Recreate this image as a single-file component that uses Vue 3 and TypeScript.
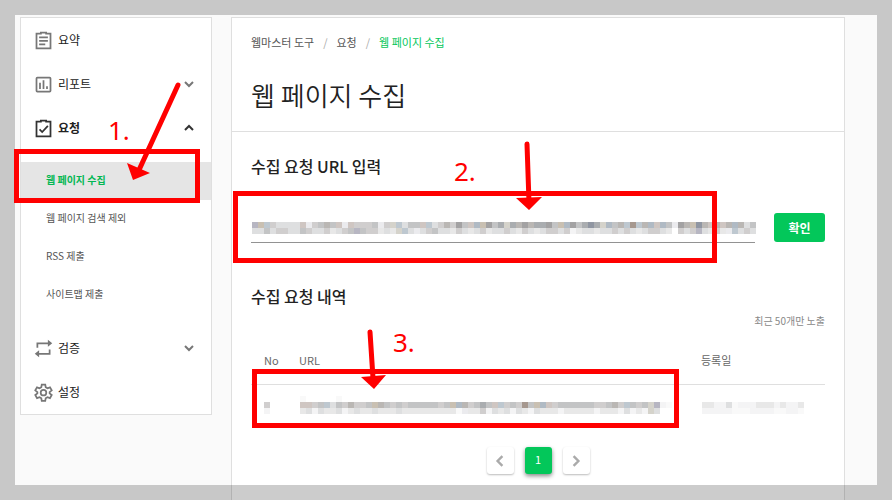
<script setup lang="ts">
import { ref } from 'vue'

interface Cell { x: number; y: number; fill: string }

const palette: Record<string, string> = {
  a: '#b7b6c2', b: '#c9c0b2', c: '#bec8d0', d: '#d0cece', e: '#dedfe0',
  f: '#ebebee', g: '#bab7b4', h: '#a3a2a3', i: '#9096a2', j: '#aaadb0',
  k: '#c3c4c5', l: '#cfc6c2', m: '#d5d3cb', n: '#a6988f', o: '#b0bac4',
  p: '#f4f4f5', q: '#e8e8e8', r: '#f9f9f9',
}

const size = 6

// Turns rows of palette letters into coloured blocks; a dot leaves a hole.
function mosaic(rows: string[]): Cell[] {
  return rows.flatMap((row, y) =>
    [...row].flatMap((key, x) =>
      palette[key] ? [{ x: x * size, y: y * size, fill: palette[key] }] : []))
}

const urlCells = mosaic([
  'abcdeeeelf' + 'dkgklflddd' + 'kfdmcekklc' + 'edgdhklobh' + 'kjmjghgjjh' + 'kbohkjijmo' + 'kgcncgolok' + 'fhgbiglglg' + 'ogek',
  'eekeddeekd' + 'eedqedkakd' + 'dqeqmcefed' + 'keeqdeqedq' + 'eedeqdeqed' + 'dedpqeeqee' + 'dedeqeddeq' + '.dedaeqdqf' + 'cede',
])
const noCells = mosaic(['d', 'p'])
const rowCells = mosaic([
  'r.....r.....................................................',
  'lldkcekdgddkbgkdkdkkkkkdkbogdkjklcdkdnkboldkkkkkkddkgdckdkma' + 'pr',
  'qepeqqepqeqqeqqqeqqqqqqqqqrfqqdpeqepeqpeqqqpqqqqqpqqqpepqpme',
])
const dateCells = mosaic(['qqpperpppqqqpqppqq', 'ppppprrrpppprrpprr'].map(row => row.slice(0, 17)))

const url = ref('')
const openGroup = ref('request')
const toggle = (name: string): void => {
  openGroup.value = openGroup.value === name ? '' : name
}
const subItems = ['웹 페이지 수집', '웹 페이지 검색 제외', 'RSS 제출', '사이트맵 제출']
const crumbs = ['웹마스터 도구', '요청']
</script>

<template>
  <div class="page">
    <nav class="side">
      <a class="item" href="#">
        <svg class="icon" viewBox="0 0 24 24"><path d="M9 4H4v17h16V4h-5M9 5V3h6v2M7 8.5h10M7 12.5h10M7 16.500h7" /></svg>
        <span>요약</span>
      </a>
      <button class="item" type="button" @click="toggle('report')">
        <svg class="icon" viewBox="0 0 24 24"><rect x="4" y="4" width="16" height="16" rx="1" /><path d="M8 10v7M12 7v10M16 14v3" /></svg>
        <span>리포트</span>
        <svg class="chev" viewBox="0 0 10 10"><path d="M1 3l4 4 4-4" /></svg>
      </button>
      <button class="item open" type="button" @click="toggle('request')">
        <svg class="icon" viewBox="0 0 24 24"><path d="M9 4H4v17h16V4h-5M9 5V3h6v2M7.500 13l3 3 6.500-7" /></svg>
        <span>요청</span>
        <svg class="chev" viewBox="0 0 10 10"><path d="M1 7l4-4 4 4" /></svg>
      </button>
      <ul v-if="openGroup === 'request'" class="sub">
        <li v-for="(s, i) in subItems" :key="s"><a href="#" :class="{ active: i === 0 }">{{ s }}</a></li>
      </ul>
      <button class="item" type="button" @click="toggle('verify')">
        <svg class="icon" viewBox="0 0 24 24"><path d="M5 11V6h13M19 13v5H6" /><path class="solid" d="M17 2l5 4-5 4zM7 14l-5 4 5 4z" /></svg>
        <span>검증</span>
        <svg class="chev" viewBox="0 0 10 10"><path d="M1 3l4 4 4-4" /></svg>
      </button>
      <a class="item" href="#">
        <svg class="icon" viewBox="0 0 24 24"><path d="M10 3h4l.5 3 2 1.200 2.900-1.100 2 3.500-2.400 1.900v1.500l2.400 1.900-2 3.500-2.900-1.100-2 1.200-.5 3h-4l-.5-3-2-1.200-2.900 1.100-2-3.500L5 13v-1.500L2.600 9.600l2-3.500 2.900 1.100 2-1.200z" /><circle cx="12" cy="12.200" r="3.200" /></svg>
        <span>설정</span>
      </a>
    </nav>

    <main class="main">
      <header class="head">
        <nav class="crumbs">
          <template v-for="c in crumbs" :key="c"><a href="#">{{ c }}</a><i>/</i></template>
          <a class="current" href="#">웹 페이지 수집</a>
        </nav>
        <h1>웹 페이지 수집</h1>
      </header>

      <section class="body">
        <h2><label for="url">수집 요청 URL 입력</label></h2>
        <form class="form" @submit.prevent>
          <div class="field">
            <input id="url" v-model="url" type="text" autocomplete="off">
            <svg v-if="!url" class="mosaic" width="504" height="12">
              <rect v-for="c in urlCells" :key="`${c.x}-${c.y}`" :x="c.x" :y="c.y" width="6" height="6" :fill="c.fill" />
            </svg>
          </div>
          <button class="confirm" type="submit">확인</button>
        </form>

        <h2>수집 요청 내역</h2>
        <p class="note">최근 50개만 노출</p>
        <table>
          <thead>
            <tr><th class="no">No</th><th>URL</th><th class="date">등록일</th></tr>
          </thead>
          <tbody>
            <tr>
              <td class="no"><svg width="6" height="12"><rect v-for="c in noCells" :key="c.y" :x="c.x" :y="c.y" width="6" height="6" :fill="c.fill" /></svg></td>
              <td><svg class="raised" width="372" height="18"><rect v-for="c in rowCells" :key="`${c.x}-${c.y}`" :x="c.x" :y="c.y" width="6" height="6" :fill="c.fill" /></svg></td>
              <td class="date"><svg width="102" height="12"><rect v-for="c in dateCells" :key="`${c.x}-${c.y}`" :x="c.x" :y="c.y" width="6" height="6" :fill="c.fill" /></svg></td>
            </tr>
          </tbody>
        </table>

        <nav class="pager">
          <button type="button" aria-label="이전"><svg class="chev" viewBox="0 0 10 10"><path d="M7 1L3 5l4 4" /></svg></button>
          <button type="button" class="on">1</button>
          <button type="button" aria-label="다음"><svg class="chev" viewBox="0 0 10 10"><path d="M3 1l4 4-4 4" /></svg></button>
        </nav>
      </section>
    </main>

    <div class="frame"></div>
    <div class="box box-menu"></div>
    <div class="box box-url"></div>
    <div class="box box-row"></div>
    <svg class="arrows" width="892" height="500" viewBox="0 0 892 500">
      <path d="M178 85L139 170M527 144l2 58M370 332l3 46" />
      <path class="tip" d="M127 163l23 10-17 7zM516 198l26-1-13 13zM361 377l25-2-12 14z" />
    </svg>
    <span class="step step-menu">1.</span>
    <span class="step step-url">2.</span>
    <span class="step step-row">3.</span>
  </div>
</template>

<style>
body { margin: 0; background: #fafafa; }
</style>

<style scoped>
* { box-sizing: border-box; }
.page {
  position: relative;
  display: grid;
  grid-template-columns: 192px 1fr;
  gap: 19px;
  height: 100vh;
  padding: 17px 47px 0 20px;
  overflow: hidden;
  background: #fafafa;
  color: #222;
  font-family: "Noto Sans CJK KR", sans-serif;
}
a { color: inherit; text-decoration: none; }
button, input { font-family: inherit; }
.side { align-self: start; background: #fff; border: 1px solid #dfdfdf; }
.item {
  display: flex;
  align-items: center;
  width: 100%;
  height: 44px;
  padding: 0 17px 0 12px;
  border: 0;
  background: none;
  color: #222;
  font-size: 12px;
  text-align: left;
}
.item span { flex: 1; margin-left: 4px; padding-bottom: 1px; }
.icon { width: 21px; height: 21px; fill: none; stroke: #777; stroke-width: 2; }
.icon .solid { fill: #777; stroke: none; }
.chev { width: 10px; height: 10px; fill: none; stroke: #777; stroke-width: 2; }
.open { font-weight: 700; }
.open svg { stroke: #333; }
.sub { margin: 0; padding: 12px 0; list-style: none; }
.sub a {
  display: flex;
  align-items: center;
  height: 38px;
  padding: 0 0 3px 25px;
  color: #555;
  font-size: 10px;
}
.sub .active { background: #e5e5e5; color: #03b753; font-weight: 700; }
.main { background: #fff; border: 1px solid #dfdfdf; border-bottom: 0; }
.head { padding: 16px 19px; border-bottom: 1px solid #dfdfdf; }
.crumbs { display: flex; gap: 9px; font-size: 11px; line-height: 16px; color: #555; }
.crumbs i { color: #aaa; font-style: normal; }
.crumbs .current { color: #03c75a; }
h1 { margin: 25px 0 0; font-size: 26px; line-height: 40px; font-weight: 350; }
.body { padding: 22px 19px 0; }
h2 { margin: 0; font-size: 16px; line-height: 24px; font-weight: 500; }
.form { display: flex; gap: 19px; margin: 35px 0 41px; }
.field { position: relative; flex: 1; }
.field input {
  display: block;
  width: 100%;
  height: 30px;
  padding: 0;
  border: 0;
  border-bottom: 1px solid #929292;
  outline: 0;
  background: none;
  font-size: 12px;
}
.mosaic { position: absolute; left: 1px; top: 9px; pointer-events: none; }
.confirm {
  width: 51px;
  height: 29px;
  padding: 0;
  border: 0;
  border-radius: 3px;
  background: #03c75a;
  color: #fff;
  font-size: 12px;
  font-weight: 700;
}
.note { margin: 5px 0 8px; color: #888; font-size: 10px; line-height: 16px; text-align: right; }
table { width: 100%; border-collapse: collapse; table-layout: fixed; }
th { height: 47px; padding: 0 0 1px; border-bottom: 1px solid #dfdfdf; color: #666; font-size: 11px; font-weight: 400; text-align: left; }
td { height: 47px; padding: 0; }
td svg { display: block; }
.no { width: 48px; padding-left: 13px; }
.date { width: 124px; }
.raised { margin: -6px 0 0 1px; }
td.date { padding-left: 1px; }
.pager { display: flex; justify-content: center; gap: 11px; margin-top: 16px; }
.pager button {
  display: flex;
  align-items: center;
  justify-content: center;
  width: 27px;
  height: 27px;
  padding: 0;
  border: 0;
  border-radius: 3px;
  background: #fff;
  box-shadow: 0 1px 2px #0004;
  font-size: 11px;
}
.pager .chev { width: 12px; height: 12px; stroke: #aaa; }
.pager .on { padding-bottom: 3px; background: #03c75a; color: #fff; box-shadow: 0 2px 4px #0007; }
.frame { position: absolute; inset: 0; border: 15px solid #0003; pointer-events: none; }
.box { position: absolute; border: 5px solid #f00; pointer-events: none; }
.box-menu { left: 14px; top: 149px; width: 186px; height: 54px; }
.box-url { left: 233px; top: 191px; width: 484px; height: 72px; }
.box-row { left: 252px; top: 369px; width: 427px; height: 59px; }
.arrows { position: absolute; left: 0; top: 0; fill: none; stroke: #f00; stroke-width: 5; stroke-linecap: round; pointer-events: none; }
.tip { fill: #f00; stroke: none; }
.step { position: absolute; color: #f00; font: 26px/32px "Noto Sans", sans-serif; }
.step-menu { left: 108px; top: 114px; }
.step-url { left: 454px; top: 155px; }
.step-row { left: 393px; top: 326px; }
</style>
